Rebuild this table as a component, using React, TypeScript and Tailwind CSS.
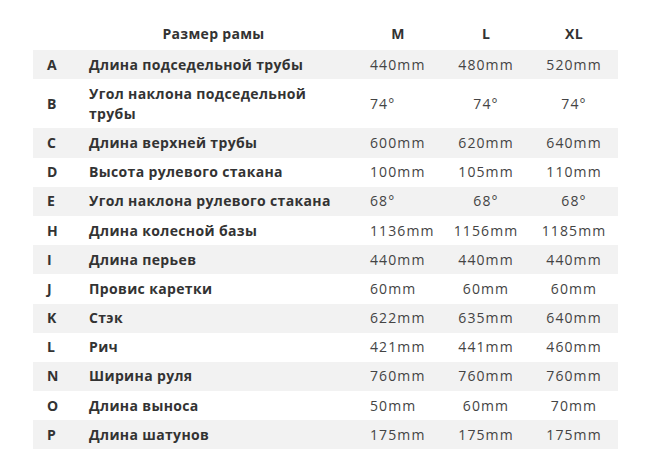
import React from "react";

const rows: [string, string, string, string, string][] = [
  ["A", "Длина подседельной трубы", "440mm", "480mm", "520mm"],
  ["B", "Угол наклона подседельной трубы", "74°", "74°", "74°"],
  ["C", "Длина верхней трубы", "600mm", "620mm", "640mm"],
  ["D", "Высота рулевого стакана", "100mm", "105mm", "110mm"],
  ["E", "Угол наклона рулевого стакана", "68°", "68°", "68°"],
  ["H", "Длина колесной базы", "1136mm", "1156mm", "1185mm"],
  ["I", "Длина перьев", "440mm", "440mm", "440mm"],
  ["J", "Провис каретки", "60mm", "60mm", "60mm"],
  ["K", "Стэк", "622mm", "635mm", "640mm"],
  ["L", "Рич", "421mm", "441mm", "460mm"],
  ["N", "Ширина руля", "760mm", "760mm", "760mm"],
  ["O", "Длина выноса", "50mm", "60mm", "70mm"],
  ["P", "Длина шатунов", "175mm", "175mm", "175mm"],
];

export default function App() {
  return (
    <div
      className="w-[651px] h-[471px] bg-white pt-[17px] pl-[33px] text-[#333]"
      style={{ fontFamily: '"Open Sans", "Noto Sans", sans-serif' }}
    >
      <div className="w-[585px]">
        <div className="flex h-[33px] items-center text-[14px] font-bold tracking-[0.3px]">
          <div className="w-[56px]" />
          <div className="w-[265px] pr-[16px] text-center">Размер рамы</div>
          <div className="w-[88px] text-center">M</div>
          <div className="w-[88px] text-center">L</div>
          <div className="w-[88px] text-center">XL</div>
        </div>
        {rows.map((r, i) => (
          <div
            key={r[0]}
            className={`flex items-center py-[4.6px] text-[14px] leading-5 ${
              i % 2 === 0 ? "bg-[#f2f2f2]" : "bg-white"
            }`}
          >
            <div className="w-[56px] pl-[14px] font-bold">{r[0]}</div>
            <div className="w-[265px] pr-[16px] font-bold tracking-[0.35px]">{r[1]}</div>
            <div className="w-[88px] pl-[16px] text-[#444] tracking-[1.1px]">{r[2]}</div>
            <div className="w-[88px] text-center text-[#444] tracking-[1.1px]">{r[3]}</div>
            <div className="w-[88px] text-center text-[#444] tracking-[1.1px]">{r[4]}</div>
          </div>
        ))}
      </div>
    </div>
  );
}
